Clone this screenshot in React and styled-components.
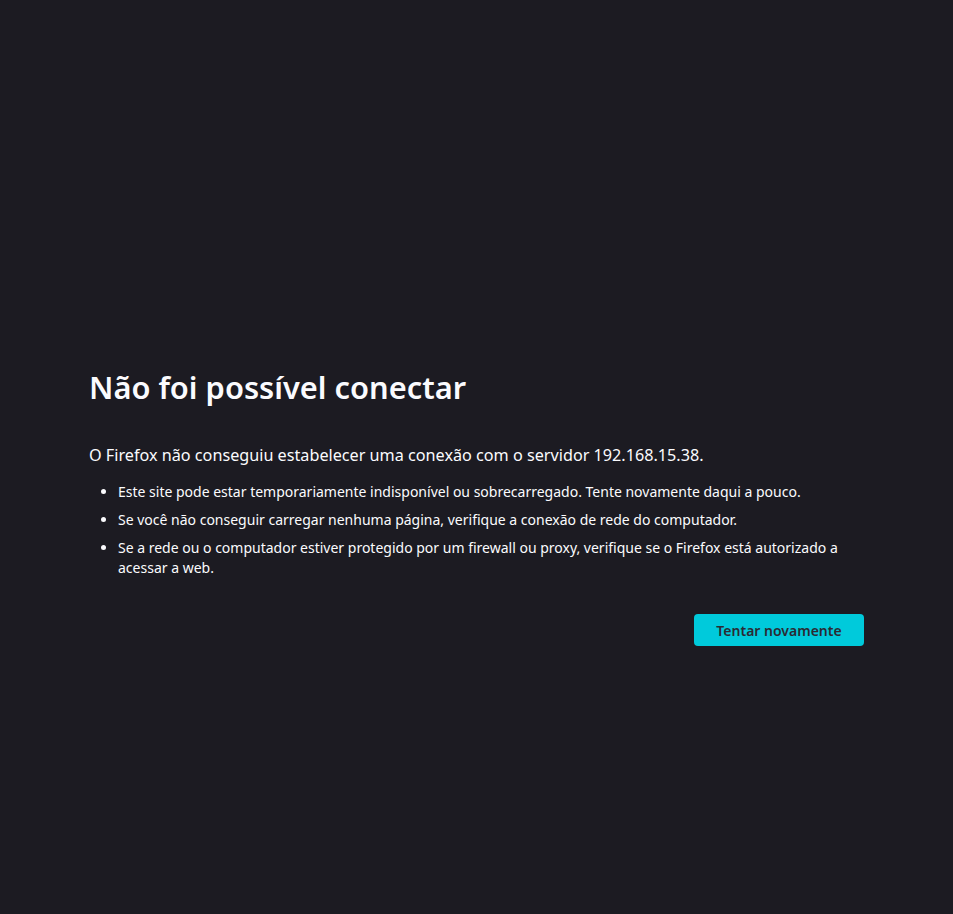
import React from 'react';
import styled, { createGlobalStyle } from 'styled-components';

const GlobalStyle = createGlobalStyle`
  html, body {
    margin: 0;
    padding: 0;
    background: #1c1b22;
  }
  body {
    font-family: "Noto Sans", "Open Sans", sans-serif;
    color: #fbfbfe;
  }
`;

const Page = styled.div`
  min-height: 914px;
  box-sizing: border-box;
  display: flex;
  justify-content: center;
  padding-top: 361px;
`;

const Container = styled.div`
  width: 775px;
  display: flex;
  flex-direction: column;
`;

const Title = styled.h1`
  margin: 0;
  font-size: 30.8px;
  font-weight: 600;
  line-height: 52px;
`;

const Lead = styled.p`
  margin: 31px 0 0;
  font-size: 16.2px;
  line-height: 22px;
`;

const List = styled.ul`
  margin: 16px 0 0;
  padding-left: 29px;
  font-size: 14px;
  line-height: 20px;
`;

const Item = styled.li`
  margin-bottom: 8px;
`;

const Actions = styled.div`
  display: flex;
  justify-content: flex-end;
  margin-top: 28px;
`;

const RetryButton = styled.button`
  width: 170px;
  height: 32px;
  border: none;
  border-radius: 4px;
  background: #00cadb;
  color: #2b2a33;
  font-family: inherit;
  font-size: 14px;
  font-weight: 600;
  cursor: pointer;
`;

const items = [
  'Este site pode estar temporariamente indisponível ou sobrecarregado. Tente novamente daqui a pouco.',
  'Se você não conseguir carregar nenhuma página, verifique a conexão de rede do computador.',
  'Se a rede ou o computador estiver protegido por um firewall ou proxy, verifique se o Firefox está autorizado a acessar a web.',
];

export default function App() {
  return (
    <>
      <GlobalStyle />
      <Page>
        <Container>
          <Title>Não foi possível conectar</Title>
          <Lead>O Firefox não conseguiu estabelecer uma conexão com o servidor 192.168.15.38.</Lead>
          <List>
            {items.map((text) => (
              <Item key={text}>{text}</Item>
            ))}
          </List>
          <Actions>
            <RetryButton>Tentar novamente</RetryButton>
          </Actions>
        </Container>
      </Page>
    </>
  );
}
